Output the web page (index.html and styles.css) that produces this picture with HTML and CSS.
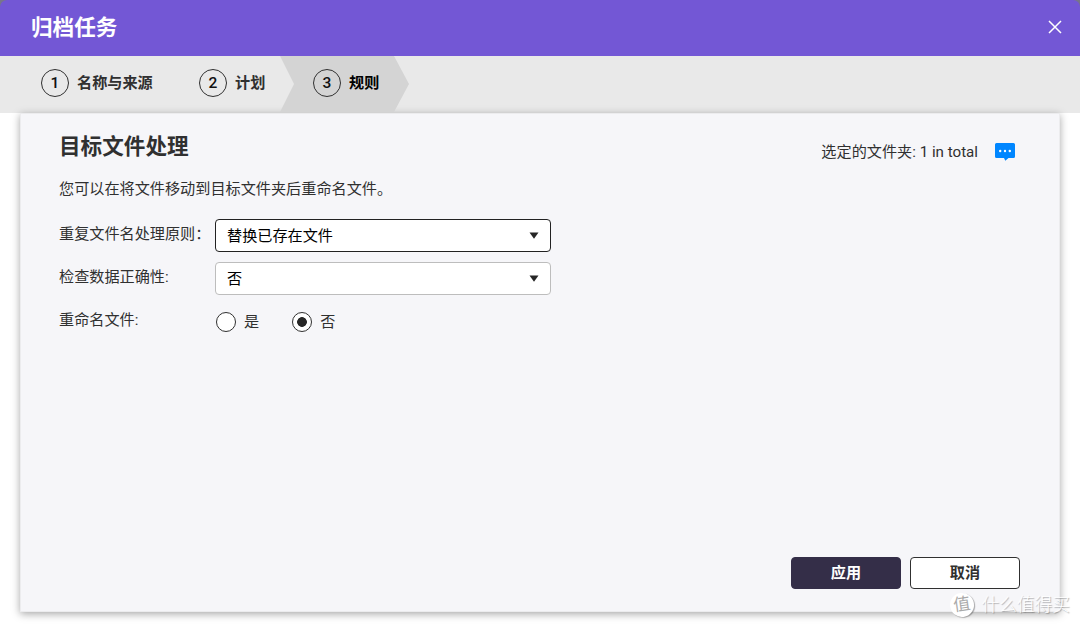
FILE: index.html
```html
<!DOCTYPE html>
<html lang="zh-CN">
<head>
    <meta charset="UTF-8">
    <meta name="viewport" content="width=device-width, initial-scale=1.0">
    <title>归档任务</title>
    <link rel="stylesheet" href="styles.css">
</head>
<body>
    <header>
        <h1>归档任务</h1>
        <svg class="fechar" width="14" height="14" viewBox="0 0 14 14">
            <path d="M1 1L13 13M13 1L1 13"/>
        </svg>
    </header>
    <nav>
        <div class="passo passo1"><span class="numero">1</span><span class="nome">名称与来源</span></div>
        <div class="passo passo2"><span class="numero">2</span><span class="nome">计划</span></div>
        <div class="passo ativo"><span class="numero">3</span><span class="nome">规则</span></div>
    </nav>
    <main>
        <section class="topo">
            <h2>目标文件处理</h2>
            <div class="pastas">
                <span>选定的文件夹: 1 in total</span>
                <svg width="20" height="18" viewBox="0 0 20 18">
                    <path class="balao" d="M1.5 0H18.5Q20 0 20 1.5V13.5Q20 15 18.5 15H13.5L10.3 17.7L9 15H1.5Q0 15 0 13.5V1.5Q0 0 1.5 0Z"/>
                    <g class="pontos">
                        <circle cx="5.2" cy="8" r="1.2"/>
                        <circle cx="10" cy="8" r="1.2"/>
                        <circle cx="14.8" cy="8" r="1.2"/>
                    </g>
                </svg>
            </div>
        </section>
        <p class="descricao">您可以在将文件移动到目标文件夹后重命名文件。</p>
        <section class="formulario">
            <span class="rotulo">重复文件名处理原则：</span>
            <div class="lista foco">
                <span>替换已存在文件</span>
                <svg width="10" height="7" viewBox="0 0 10 7"><path d="M0.5 0.5H9.5L5 6.8Z"/></svg>
            </div>
            <span class="rotulo">检查数据正确性:</span>
            <div class="lista">
                <span>否</span>
                <svg width="10" height="7" viewBox="0 0 10 7"><path d="M0.5 0.5H9.5L5 6.8Z"/></svg>
            </div>
            <span class="rotulo">重命名文件:</span>
            <div class="opcoes">
                <div class="opcao"><span class="bola"></span><span class="nome">是</span></div>
                <div class="opcao"><span class="bola marcada"></span><span class="nome">否</span></div>
            </div>
        </section>
        <footer>
            <button class="aplicar">应用</button>
            <button class="cancelar">取消</button>
        </footer>
    </main>
    <div class="marca">
        <span class="selo">值</span>
        <span>什么值得买</span>
    </div>
</body>
</html>
```
FILE: styles.css
```css
* {
    padding: 0px;
    margin: 0px;
    box-sizing: border-box;
}
:root {
    --roxo: #7357d5;
    --escuro: #342e48;
    --texto: #303030;
    --azul: #0086ff;
}
body {
    height: 627px;
    overflow: hidden;
    background-color: #ffffff;
    background-image: linear-gradient(#77758a, #77758a);
    background-size: 100% 20px;
    background-repeat: no-repeat;
    color: var(--texto);
    font-family: Roboto, "Noto Sans CJK SC", sans-serif;
    font-size: 15.15px;
}
header {
    height: 56px;
    padding: 0px 18px 0px 31px;
    display: flex;
    align-items: center;
    justify-content: space-between;
    background-color: var(--roxo);
    border-radius: 7px 7px 0px 0px;
}
header h1 {
    color: #ffffff;
    font-size: 21.6px;
    line-height: 30px;
}
.fechar {
    margin-top: -2px;
    stroke: #ffffff;
    stroke-width: 1.5;
    fill: none;
}
nav {
    height: 57px;
    padding-left: 41px;
    display: flex;
    background-color: #e9e9e9;
}
.passo {
    height: 56px;
    display: flex;
    align-items: center;
    font-weight: bold;
    line-height: 22px;
    white-space: nowrap;
}
.passo .nome {
    padding-bottom: 3px;
}
.passo1 {
    width: 158px;
}
.passo2 {
    width: 81px;
}
.numero {
    width: 28px;
    height: 28px;
    margin: -2px 8px 0px 0px;
    display: flex;
    align-items: center;
    justify-content: center;
    border: 1.5px solid #303030;
    border-radius: 50%;
    color: #111111;
    font-weight: 500;
    font-size: 15.5px;
}
.ativo {
    width: 129px;
    padding-left: 33px;
    background-color: #d4d4d4;
    clip-path: polygon(0 0, 114px 0, 129px 50%, 114px 100%, 0 100%, 14px 50%);
    color: #000000;
}
main {
    height: 499px;
    margin: 0px 20px;
    padding: 19px 39px 22px 38px;
    display: flex;
    flex-direction: column;
    background-color: #f6f6f9;
    border: 1px solid #ececee;
    box-shadow: 0px 2px 8px rgba(0, 0, 0, 0.35);
}
.topo {
    height: 45px;
    display: flex;
    justify-content: space-between;
}
h2 {
    font-size: 21.6px;
    line-height: 28px;
}
.pastas {
    height: 22px;
    margin: 8px 5px 0px 0px;
    display: flex;
    align-items: center;
    gap: 17px;
}
.pastas span {
    padding-bottom: 4px;
}
.balao {
    fill: var(--azul);
}
.pontos {
    fill: #ffffff;
}
.descricao {
    line-height: 22px;
}
.formulario {
    margin-top: 19px;
    display: grid;
    grid-template-columns: 156px 336px;
    grid-template-rows: 33px 33px 33px;
    row-gap: 10px;
}
.rotulo {
    line-height: 31px;
    white-space: nowrap;
}
.lista {
    padding: 0px 11px;
    display: flex;
    align-items: center;
    justify-content: space-between;
    background-color: #ffffff;
    border: 1px solid #bdbdbd;
    border-radius: 4px;
    color: #000000;
}
.lista span {
    padding-bottom: 3px;
}
.lista svg {
    fill: #262626;
}
.foco {
    border-color: #222222;
}
.opcoes {
    padding-left: 1px;
    display: flex;
    align-items: center;
    gap: 33px;
}
.opcao {
    display: flex;
    align-items: center;
    gap: 8px;
}
.opcao .nome {
    padding-bottom: 3px;
}
.bola {
    width: 20px;
    height: 20px;
    border: 1.5px solid #303030;
    border-radius: 50%;
    background-color: #ffffff;
}
.marcada {
    background-image: radial-gradient(circle, #262626 4.5px, #ffffff 5.2px);
}
footer {
    margin-top: auto;
    display: flex;
    justify-content: flex-end;
    gap: 9px;
}
button {
    width: 110px;
    height: 32px;
    padding-bottom: 5px;
    border: 1px solid var(--texto);
    border-radius: 4px;
    font-family: inherit;
    font-size: 15.15px;
    font-weight: bold;
}
.aplicar {
    background-color: var(--escuro);
    border-color: var(--escuro);
    color: #ffffff;
}
.cancelar {
    background-color: #ffffff;
    color: var(--texto);
}
.marca {
    position: absolute;
    right: 10px;
    bottom: 9px;
    display: flex;
    align-items: center;
    gap: 8px;
    color: #ffffff;
    font-size: 17.7px;
    font-weight: 300;
    line-height: 26px;
    text-shadow: 1px 1px 1px rgba(0, 0, 0, 0.3);
}
.selo {
    width: 24px;
    height: 24px;
    border-radius: 50%;
    background-color: #ffffff;
    box-shadow: 1px 1px 1px rgba(0, 0, 0, 0.3);
    color: #aaaaaa;
    font-size: 17px;
    font-weight: 400;
    line-height: 23px;
    text-align: center;
    text-shadow: none;
    transform: rotate(-8deg);
}
```
